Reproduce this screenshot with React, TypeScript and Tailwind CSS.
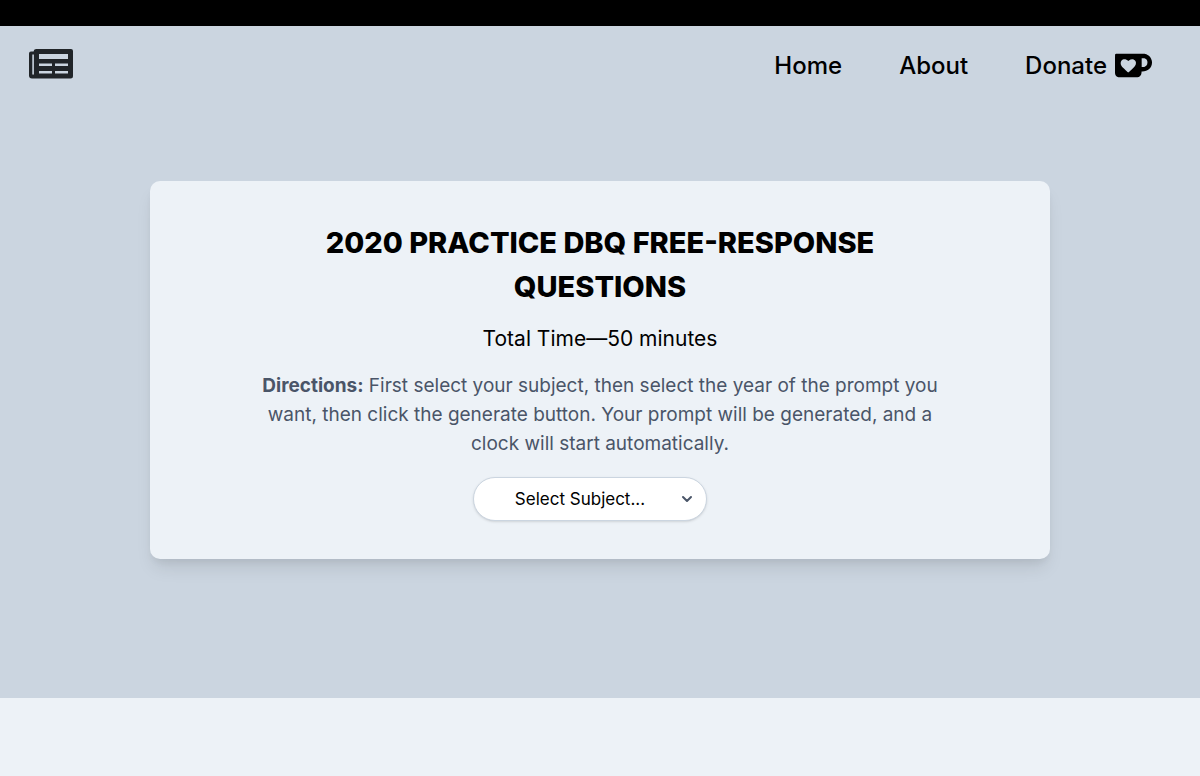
import { useState } from 'react'
import { ChevronDown } from 'lucide-react'

const navLinks = [
  { label: 'Home', href: '#home' },
  { label: 'About', href: '#about' },
]

const subjects = ['US History', 'World History', 'European History']

function NewspaperIcon() {
  return (
    <svg viewBox="0 0 44 30" className="h-[30px] w-11" aria-hidden="true">
      <path
        fill="#212529"
        fillRule="evenodd"
        d="M7 0H42a2 2 0 0 1 2 2V27a2.5 2.5 0 0 1-2.500 2.500H3A3 3 0 0 1 0 26.500V4.500A2 2 0 0 1 2 2.500H4.600A2.500 2.500 0 0 1 7 0ZM10 5V10H39V5ZM10 14.500V17H23V14.500ZM26 14.500V17H39V14.500ZM10 22V24.500H23V22ZM26 22V24.500H39V22ZM3.300 5.500V25a.8.8 0 0 0 1.600 0V5.500Z"
      />
    </svg>
  )
}

function CupIcon() {
  return (
    <svg viewBox="0 0 24 24" className="size-[37px]" fill="currentColor" aria-hidden="true">
      <path d="M23.881 8.948c-.773-4.085-4.859-4.593-4.859-4.593H.723c-.604 0-.679.798-.679.798s-.082 7.324-.022 11.822c.164 2.424 2.586 2.672 2.586 2.672s8.267-.023 11.966-.049c2.438-.426 2.683-2.566 2.658-3.734 4.352.24 7.422-2.831 6.649-6.916zm-11.062 3.511c-1.246 1.453-4.011 3.976-4.011 3.976s-.121.119-.31.023c-.076-.057-.108-.09-.108-.09-.443-.441-3.368-3.049-4.034-3.954-.709-.965-1.041-2.7-.091-3.71.951-1.01 3.005-1.086 4.363.407 0 0 1.565-1.782 3.468-.963 1.904.82 1.832 3.011.723 4.311zm6.173.478c-.928.116-1.682.028-1.682.028V7.284h1.77s1.971.551 1.971 2.638c0 1.913-.985 2.667-2.059 3.015z" />
    </svg>
  )
}

function Header() {
  return (
    <header className="flex items-start justify-between pt-[23px] pr-12 pl-[29px]">
      <a href="#home" aria-label="Newspaper">
        <NewspaperIcon />
      </a>
      <nav className="flex h-[33px] items-center gap-[57px] text-2xl font-medium">
        {navLinks.map((link) => (
          <a key={link.label} href={link.href}>{link.label}</a>
        ))}
        <a href="#donate" className="flex items-center gap-2">
          Donate
          <CupIcon />
        </a>
      </nav>
    </header>
  )
}

function SubjectSelect() {
  const [subject, setSubject] = useState('')

  return (
    <div className="relative mr-5 w-[234px]">
      <select
        aria-label="Subject"
        value={subject}
        onChange={(e) => setSubject(e.target.value)}
        className="h-11 w-full appearance-none rounded-full border border-[#cbd5e0] bg-white pt-0.5 pr-12 pl-7 text-center text-[17px] text-black shadow"
      >
        <option value="">Select Subject...</option>
        {subjects.map((name) => (
          <option key={name} value={name}>{name}</option>
        ))}
      </select>
      <ChevronDown className="pointer-events-none absolute inset-y-0 right-3 my-auto size-4 text-[#4a5568]" strokeWidth={3} />
    </div>
  )
}

export default function App() {
  return (
    <div className="min-h-screen bg-[#edf2f7] font-[Inter,sans-serif] text-black">
      <div className="h-[26px] bg-black" />
      <div className="bg-[#cbd5e0] pb-[139px]">
        <Header />
        <main className="mx-auto mt-[99px] flex w-3/4 flex-col items-center rounded-[10px] bg-[#edf2f7] px-28 pt-10 pb-[38px] text-center shadow-[0_12px_18px_-4px_rgba(0,0,0,0.1),0_5px_7px_-2px_rgba(0,0,0,0.05)]">
          <h1 className="max-w-[600px] text-[29px] leading-[44px] font-extrabold">
            2020 PRACTICE DBQ FREE-RESPONSE QUESTIONS
          </h1>
          <p className="mt-3.5 text-[21px] leading-8">Total Time—50 minutes</p>
          <p className="mt-4 mb-[19px] text-[19px] leading-[29px] text-[#4a5568]">
            <strong>Directions:</strong> First select your subject, then select the year of the prompt you want, then
            click the generate button. Your prompt will be generated, and a clock will start automatically.
          </p>
          <SubjectSelect />
        </main>
      </div>
    </div>
  )
}
